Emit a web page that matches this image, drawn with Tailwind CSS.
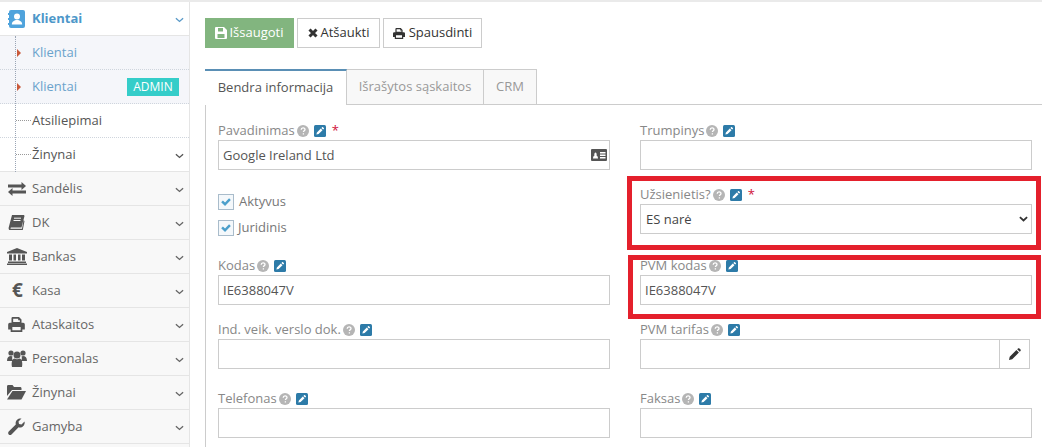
<!DOCTYPE html>
<html lang="lt">
<head>
<meta charset="utf-8">
<title>Klientai</title>
<script src="https://cdn.jsdelivr.net/npm/@tailwindcss/browser@4"></script>
</head>
<body class="w-[1042px] h-[447px] overflow-hidden bg-white font-['Open_Sans',sans-serif] text-[13px] text-[#666] relative">
<svg class="hidden">
  <symbol id="chev" viewBox="0 0 10 6"><path d="M1 1l4 3.6L9 1" fill="none" stroke="currentColor" stroke-width="1.5"/></symbol>
  <symbol id="help" viewBox="0 0 12 12"><circle cx="6" cy="6" r="6" fill="#b5b5b5"/><path d="M4.200 4.700c0-2.300 3.800-2.300 3.800-.2 0 1.300-1.600 1.300-1.600 2.600M6.400 8.200v1.300" fill="none" stroke="#fff" stroke-width="1.300"/></symbol>
  <symbol id="edit" viewBox="0 0 12 12"><rect width="12" height="12" rx="1.500" fill="#2d7ba8"/><path d="M2.400 9.600l.5-2.200 3.900-3.900 1.700 1.700-3.900 3.900zM7.400 2.900l.7-.7c.3-.3.6-.3.9 0l.8.8c.3.3.3.6 0 .9l-.7.7z" fill="#fff"/></symbol>
  <symbol id="printer" viewBox="0 0 20 18"><path d="M5 0h8l3 3v4H4V1zM6 2v4h8V4h-2V2zM2 7h16a2 2 0 0 1 2 2v6h-3v3H3v-3H0V9a2 2 0 0 1 2-2zm3 5v4h10v-4z" fill="currentColor" fill-rule="evenodd"/></symbol>
  <symbol id="check" viewBox="0 0 16 16"><path d="M2.500 8.200l2-2 2.400 2.400 4.600-4.800 2 2-6.600 6.800z" fill="#4b9fcb"/></symbol>
</svg>

<div class="flex flex-col h-full">
  <div class="h-[2px] shrink-0 bg-[#eaeaea]"></div>
  <div class="flex flex-1 min-h-0">
    <!-- Sidebar -->
    <aside class="w-[190px] shrink-0 border-r border-[#e5e5e5] bg-[#f8f8f8] relative overflow-hidden">
      <div class="h-[34px] bg-white border-b border-[#e5e5e5] flex items-center text-[#4d97c9] font-bold">
        <span class="w-[32px] flex justify-center pl-[1px]">
          <svg width="17" height="18" viewBox="0 0 17 18"><rect width="16" height="18" x="1" rx="2" fill="#4fa3dc"/><rect y="3" width="2" height="2" fill="#4fa3dc"/><rect y="8" width="2" height="2" fill="#4fa3dc"/><rect y="13" width="2" height="2" fill="#4fa3dc"/><circle cx="9" cy="6.500" r="3" fill="#fff"/><path d="M3.800 14.500c0-6 10.400-6 10.400 0z" fill="#fff"/></svg>
        </span>
        <span class="flex-1">Klientai</span>
        <svg class="w-[9px] h-[6px] mr-[5px] mt-[2px] text-[#5a9ac8]"><use href="#chev"/></svg>
      </div>
      <div class="relative">
        <div class="h-[34px] bg-[#f5f6fa] border-b border-dotted border-[#cfd5dd] flex items-center pl-[32px] text-[#6ba3cc] relative">
          <span class="absolute left-[17px] top-[13px] w-0 h-0 border-y-[4px] border-y-transparent border-l-[4px] border-l-[#c9593a]"></span>
          <span>Klientai</span>
        </div>
        <div class="h-[34px] bg-[#f5f6fa] border-b border-dotted border-[#cfd5dd] flex items-center pl-[32px] text-[#6ba3cc] relative">
          <span class="absolute left-[17px] top-[13px] w-0 h-0 border-y-[4px] border-y-transparent border-l-[4px] border-l-[#c9593a]"></span>
          <span class="flex-1">Klientai</span>
          <span class="w-[52px] h-[18px] mr-[10px] bg-[#35cdc9] text-white text-[12px] flex items-center justify-center">ADMIN</span>
        </div>
        <div class="h-[34px] bg-white border-b border-dotted border-[#cfd5dd] flex items-center pl-[32px] text-[#555] relative">
          <span class="absolute left-[16px] top-[16px] w-[15px] border-t border-dotted border-[#999]"></span>
          <span>Atsiliepimai</span>
        </div>
        <div class="h-[34px] bg-white border-b border-[#e5e5e5] flex items-center pl-[32px] text-[#555] relative">
          <span class="absolute left-[16px] top-[16px] w-[15px] border-t border-dotted border-[#999]"></span>
          <span class="flex-1">Žinynai</span>
          <svg class="w-[9px] h-[6px] mr-[5px] mt-[2px] text-[#555]"><use href="#chev"/></svg>
        </div>
        <div class="absolute left-[15px] top-0 bottom-0 z-10 border-l border-dotted border-[#9aa5b5]"></div>
      </div>

      <div class="h-[34px] border-b border-[#e5e5e5] flex items-center">
        <span class="w-[32px] flex justify-center pl-[1px]"><svg width="18" height="14" viewBox="0 0 18 14"><path d="M0 2.500h13.500V0L18 4l-4.500 4V5.500H0zM18 8.500H4.500V6L0 10l4.500 4v-2.500H18z" fill="#555"/></svg></span>
        <span class="flex-1">Sandėlis</span>
        <svg class="w-[9px] h-[6px] mr-[5px] mt-[2px]"><use href="#chev"/></svg>
      </div>
      <div class="h-[34px] border-b border-[#e5e5e5] flex items-center">
        <span class="w-[32px] flex justify-center pl-[1px]"><svg width="17" height="15" viewBox="0 0 17 15"><path d="M4 0h12l.5 1-3 11.500H3.200c-.9 0-1 1.300 0 1.300H14l1.500-8.500 1 .7-1.800 9.500H2.500C.9 15.500.4 13.700.7 12.500z" fill="#555"/><path d="M6 3.200h7M5.500 5.500h7" stroke="#f8f8f8" stroke-width="1"/></svg></span>
        <span class="flex-1">DK</span>
        <svg class="w-[9px] h-[6px] mr-[5px] mt-[2px]"><use href="#chev"/></svg>
      </div>
      <div class="h-[34px] border-b border-[#e5e5e5] flex items-center">
        <span class="w-[32px] flex justify-center pl-[1px]"><svg width="20" height="17" viewBox="0 0 20 17"><path d="M10 0l10 4v1.500H0V4zM2 6.500h3v6H2zM6.500 6.500h2.500v6H6.500zM11 6.500h2.500v6H11zM15 6.500h3v6h-3zM1 13.500h18V15H1zM0 15.500h20V17H0z" fill="#555"/></svg></span>
        <span class="flex-1">Bankas</span>
        <svg class="w-[9px] h-[6px] mr-[5px] mt-[2px]"><use href="#chev"/></svg>
      </div>
      <div class="h-[34px] border-b border-[#e5e5e5] flex items-center">
        <span class="w-[32px] flex justify-center pl-[3px] text-[19px] font-bold leading-none text-[#555]">€</span>
        <span class="flex-1">Kasa</span>
        <svg class="w-[9px] h-[6px] mr-[5px] mt-[2px]"><use href="#chev"/></svg>
      </div>
      <div class="h-[34px] border-b border-[#e5e5e5] flex items-center">
        <span class="w-[32px] flex justify-center pl-[1px] text-[#555]"><svg class="w-[17px] h-[15px]"><use href="#printer"/></svg></span>
        <span class="flex-1">Ataskaitos</span>
        <svg class="w-[9px] h-[6px] mr-[5px] mt-[2px]"><use href="#chev"/></svg>
      </div>
      <div class="h-[34px] border-b border-[#e5e5e5] flex items-center">
        <span class="w-[32px] flex justify-center pl-[1px]"><svg width="20" height="17" viewBox="0 0 20 17"><circle cx="4" cy="3" r="2.600" fill="#555"/><circle cx="16" cy="3" r="2.600" fill="#555"/><circle cx="10" cy="5" r="3.500" fill="#555"/><path d="M0 11c0-3.500 1.500-5 4-5l1.500.5c-.5 1-.5 2.500.3 4.500H0zM20 11c0-3.500-1.500-5-4-5l-1.500.5c.5 1 .5 2.500-.3 4.500H20zM5 17c-1-5 .5-8 2.500-8.500 1.500 1 3.500 1 5 0 2 .5 3.500 3.500 2.500 8.500z" fill="#555"/></svg></span>
        <span class="flex-1">Personalas</span>
        <svg class="w-[9px] h-[6px] mr-[5px] mt-[2px]"><use href="#chev"/></svg>
      </div>
      <div class="h-[34px] border-b border-[#e5e5e5] flex items-center">
        <span class="w-[32px] flex justify-center pl-[1px]"><svg width="19" height="15" viewBox="0 0 19 15"><path d="M0 1.500C0 .5.500 0 1.500 0h4l1.500 2h6c1 0 1.500.5 1.500 1.500V5H5L0 11z" fill="#555"/><path d="M5.500 6H19l-4.500 8.500H0z" fill="#555"/></svg></span>
        <span class="flex-1">Žinynai</span>
        <svg class="w-[9px] h-[6px] mr-[5px] mt-[2px]"><use href="#chev"/></svg>
      </div>
      <div class="h-[34px] border-b border-[#e5e5e5] flex items-center">
        <span class="w-[32px] flex justify-center pl-[1px]"><svg width="17" height="17" viewBox="0 0 17 17"><path d="M16.500 3.500c.8 3-1.500 6-4.500 6-.5 0-1-.1-1.400-.2L3.500 16.400c-.8.8-2 .8-2.800 0s-.7-2 0-2.800L7.800 6.500C7 3 9.500 0 13.500.5l-3 3 .5 2.500 2.500.5z" fill="#555"/></svg></span>
        <span class="flex-1">Gamyba</span>
        <svg class="w-[9px] h-[6px] mr-[5px] mt-[2px]"><use href="#chev"/></svg>
      </div>
    </aside>

    <!-- Main -->
    <main class="flex-1 min-w-0 pl-[15px] pt-[16px] overflow-hidden">
      <div class="flex gap-[3px] h-[30px]">
        <button class="w-[89px] bg-[#82b57f] text-white flex items-center justify-center gap-[2px]">
          <svg width="12" height="12" viewBox="0 0 12 12"><path d="M0 1a1 1 0 0 1 1-1h8l3 3v8a1 1 0 0 1-1 1H1a1 1 0 0 1-1-1zM3 1v3.500h5V1zM2.500 7v4h7V7z" fill="#fff" fill-rule="evenodd"/></svg>
          Išsaugoti
        </button>
        <button class="w-[83px] bg-white border border-[#ccc] text-[#333] flex items-center justify-center gap-[3px]">
          <svg width="10" height="10" viewBox="0 0 10 10"><path d="M1.500 1.500l7 7M8.500 1.500l-7 7" stroke="#333" stroke-width="3"/></svg>
          Atšaukti
        </button>
        <button class="w-[99px] bg-white border border-[#ccc] text-[#333] flex items-center justify-center gap-[4px]">
          <svg class="w-[12px] h-[11px]"><use href="#printer"/></svg>
          Spausdinti
        </button>
      </div>

      <div class="flex mt-[21px] h-[35px] relative z-10">
        <div class="w-[142px] h-[36px] bg-white border-t-2 border-t-[#5a8fb5] border-r border-r-[#ccc] flex items-center justify-center text-[#555]">Bendra informacija</div>
        <div class="w-[137px] bg-[#f8f8f8] border-t border-r border-[#ccc] flex items-center justify-center text-[#999]">Išrašytos sąskaitos</div>
        <div class="w-[53px] bg-[#f8f8f8] border-t border-r border-[#ccc] flex items-center justify-center text-[#999]">CRM</div>
      </div>

      <div class="border-l border-t border-[#ccc] pl-[12px] pt-[15px] h-[343px]">
        <!-- row 1 -->
        <div class="flex gap-[30px]">
          <div class="w-[392px]">
            <div class="h-[20px] pt-[2px] flex items-center text-[#888]">Pavadinimas<svg class="w-[12px] h-[12px] ml-[2px]"><use href="#help"/></svg><svg class="w-[12px] h-[12px] ml-[5px]"><use href="#edit"/></svg><span class="ml-[6px] text-[#d0103a]">*</span></div>
            <div class="h-[30px] border border-[#ccc] flex items-center justify-between pl-[4px] pr-[1px] text-[#555]">
              <span class="pt-[1px]">Google Ireland Ltd</span>
              <svg width="16" height="12" viewBox="0 0 16 12" class="mr-[1px]"><path d="M1 0h14a1 1 0 0 1 1 1v10a1 1 0 0 1-1 1H1a1 1 0 0 1-1-1V1a1 1 0 0 1 1-1zM2 9.500h5c0-2-1-2.800-1.500-3 .6-1.500-.2-3-1-3s-1.600 1.500-1 3C3 6.700 2 7.500 2 9.500zM9 3v1.400h5.500V3zM9 5.500v1.400h5.500V5.500zM9 8v1.400h5.500V8z" fill="#555" fill-rule="evenodd"/></svg>
            </div>
          </div>
          <div class="w-[392px]">
            <div class="h-[20px] pt-[2px] flex items-center text-[#888]">Trumpinys<svg class="w-[12px] h-[12px] ml-[2px]"><use href="#help"/></svg><svg class="w-[12px] h-[12px] ml-[5px]"><use href="#edit"/></svg></div>
            <div class="h-[30px] border border-[#ccc]"></div>
          </div>
        </div>
        <!-- row 2 -->
        <div class="flex gap-[30px] mt-[14px] h-[50px]">
          <div class="w-[392px] flex flex-col gap-[10px] pt-[10px]">
            <div class="flex items-center h-[16px] text-[#777]"><span class="w-[16px] h-[16px] border border-[#a9bccb] bg-[#f4f8fb] flex items-center justify-center"><svg class="w-[14px] h-[14px]"><use href="#check"/></svg></span><span class="ml-[5px]">Aktyvus</span></div>
            <div class="flex items-center h-[16px] text-[#777]"><span class="w-[16px] h-[16px] border border-[#a9bccb] bg-[#f4f8fb] flex items-center justify-center"><svg class="w-[14px] h-[14px]"><use href="#check"/></svg></span><span class="ml-[4px]">Juridinis</span></div>
          </div>
          <div class="w-[392px]">
            <div class="h-[20px] pt-[2px] flex items-center text-[#888]">Užsienietis?<svg class="w-[12px] h-[12px] ml-[2px]"><use href="#help"/></svg><svg class="w-[12px] h-[12px] ml-[5px]"><use href="#edit"/></svg><span class="ml-[6px] text-[#d0103a]">*</span></div>
            <div class="h-[30px] border border-[#ccc] flex items-center justify-between pl-[5px] pr-[3px] text-[#444]">
              <span class="pt-[1px]">ES narė</span>
              <svg class="w-[9px] h-[6px] text-[#333]" viewBox="0 0 10 6"><path d="M1 1l4 3.600L9 1" fill="none" stroke="currentColor" stroke-width="2"/></svg>
            </div>
          </div>
        </div>
        <!-- row 3 -->
        <div class="flex gap-[30px] mt-[21px]">
          <div class="w-[392px]">
            <div class="h-[20px] pt-[2px] flex items-center text-[#888]">Kodas<svg class="w-[12px] h-[12px] ml-[2px]"><use href="#help"/></svg><svg class="w-[12px] h-[12px] ml-[5px]"><use href="#edit"/></svg></div>
            <div class="h-[30px] border border-[#ccc] flex items-center pl-[4px] pt-[1px] text-[#555]">IE6388047V</div>
          </div>
          <div class="w-[392px]">
            <div class="h-[20px] pt-[2px] flex items-center text-[#888]">PVM kodas<svg class="w-[12px] h-[12px] ml-[2px]"><use href="#help"/></svg><svg class="w-[12px] h-[12px] ml-[5px]"><use href="#edit"/></svg></div>
            <div class="h-[30px] border border-[#ccc] flex items-center pl-[4px] pt-[1px] text-[#555]">IE6388047V</div>
          </div>
        </div>
        <!-- row 4 -->
        <div class="flex gap-[30px] mt-[14px]">
          <div class="w-[392px]">
            <div class="h-[20px] pt-[2px] flex items-center text-[#888]">Ind. veik. verslo dok.<svg class="w-[12px] h-[12px] ml-[2px]"><use href="#help"/></svg><svg class="w-[12px] h-[12px] ml-[5px]"><use href="#edit"/></svg></div>
            <div class="h-[30px] border border-[#ccc]"></div>
          </div>
          <div class="w-[392px]">
            <div class="h-[20px] pt-[2px] flex items-center text-[#888]">PVM tarifas<svg class="w-[12px] h-[12px] ml-[2px]"><use href="#help"/></svg><svg class="w-[12px] h-[12px] ml-[5px]"><use href="#edit"/></svg></div>
            <div class="w-[390px] h-[30px] border border-[#ccc] flex justify-end">
              <span class="w-[30px] border-l border-[#ccc] flex items-center justify-center">
                <svg width="12" height="12" viewBox="0 0 12 12"><path d="M0 12l.7-3.200L7.400 2.100l2.500 2.500-6.700 6.700zM8.200 1.300l.8-.8c.4-.4 1-.4 1.400 0l1.100 1.100c.4.4.4 1 0 1.400l-.8.8z" fill="#333"/></svg>
              </span>
            </div>
          </div>
        </div>
        <!-- row 5 -->
        <div class="flex gap-[30px] mt-[19px]">
          <div class="w-[392px]">
            <div class="h-[20px] pt-[2px] flex items-center text-[#888]">Telefonas<svg class="w-[12px] h-[12px] ml-[2px]"><use href="#help"/></svg><svg class="w-[12px] h-[12px] ml-[5px]"><use href="#edit"/></svg></div>
            <div class="h-[30px] border border-[#ccc]"></div>
          </div>
          <div class="w-[392px]">
            <div class="h-[20px] pt-[2px] flex items-center text-[#888]">Faksas<svg class="w-[12px] h-[12px] ml-[2px]"><use href="#help"/></svg><svg class="w-[12px] h-[12px] ml-[5px]"><use href="#edit"/></svg></div>
            <div class="h-[30px] border border-[#ccc]"></div>
          </div>
        </div>
      </div>
    </main>
  </div>
</div>

<!-- annotation rectangles over the form -->
<div class="absolute left-[627px] top-[176px] w-[414px] h-[74px] border-[5px] border-[#e4202c]"></div>
<div class="absolute left-[628px] top-[255px] w-[413px] h-[64px] border-[5px] border-[#e4202c]"></div>
</body>
</html>
